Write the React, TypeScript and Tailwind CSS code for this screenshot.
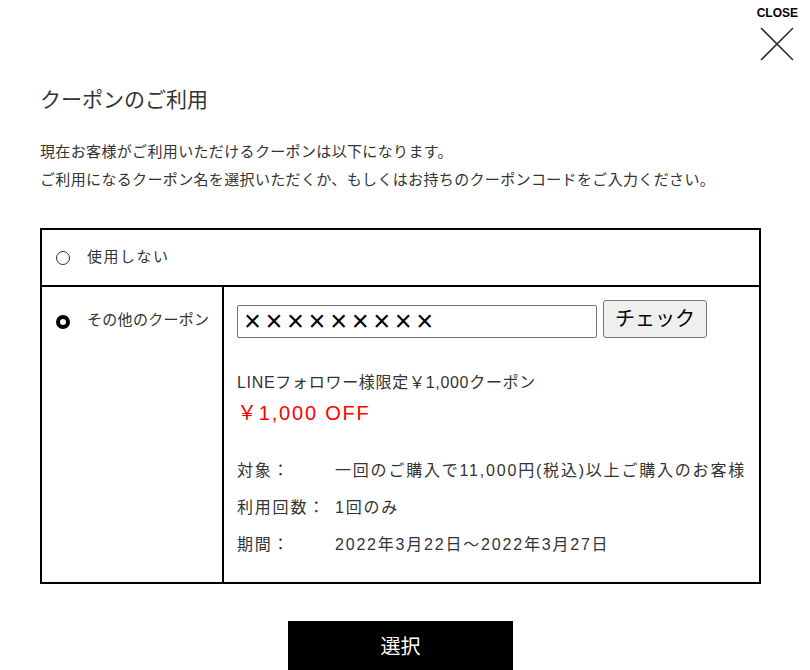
import React from 'react';

const font = { fontFamily: '"Liberation Sans", "Noto Sans CJK JP", sans-serif' };

function Radio({ checked }: { checked: boolean }) {
  return checked ? (
    <span className="inline-block w-[14px] h-[14px] rounded-full border-[4px] border-black bg-white shrink-0" />
  ) : (
    <span className="inline-block w-[14px] h-[14px] rounded-full border border-[#333] bg-white shrink-0" />
  );
}

export default function App() {
  return (
    <div className="relative w-[810px] h-[670px] overflow-hidden bg-white text-[#333]" style={font}>
      {/* Close */}
      <button type="button" className="absolute right-[12px] top-[6px] flex flex-col items-center">
        <span className="text-[12px] font-bold text-black leading-[14px]">CLOSE</span>
        <svg width="36" height="36" viewBox="0 0 36 36" className="mt-[6px]">
          <path d="M2 2 L34 34 M34 2 L2 34" stroke="#333" strokeWidth="1.6" />
        </svg>
      </button>

      <div className="pl-10 pr-[49px] pt-[84px]">
        <h2 className="text-[21px] leading-[32px] text-[#333]">クーポンのご利用</h2>
        <p className="mt-[22px] text-[15px] leading-[28px] tracking-[0.35px]">
          現在お客様がご利用いただけるクーポンは以下になります。
          <br />
          ご利用になるクーポン名を選択いただくか、もしくはお持ちのクーポンコードをご入力ください。
        </p>

        {/* Coupon table */}
        <div className="mt-[34px] border-2 border-black">
          <div className="h-[55px] flex items-center gap-[17px] pl-[14px] text-[15px] tracking-[1.5px]">
            <Radio checked={false} />
            <span>使用しない</span>
          </div>
          <div className="flex border-t-2 border-black h-[297px]">
            <div className="w-[182px] border-r-2 border-black pl-[14px] pt-[22px] flex items-start gap-[17px] text-[15px] tracking-[0.3px]">
              <span className="mt-[4px]"><Radio checked /></span>
              <span className="leading-[22px]">その他のクーポン</span>
            </div>
            <div className="flex-1 pl-[13px] pt-[13px]">
              <div className="flex items-center gap-[6px]">
                <div className="w-[360px] h-[33px] mt-[4px] border border-[#767676] rounded-[2px] pl-[6px] flex items-center text-[29px] leading-none text-black tracking-[4.6px]">
                  ×××××××××
                </div>
                <button
                  type="button"
                  className="w-[104px] h-[38px] border border-[#767676] rounded-[3px] bg-[#efefef] text-[20px] text-black"
                >
                  チェック
                </button>
              </div>
              <p className="mt-[34px] text-[16px] leading-[22px] tracking-[0.7px]">LINEフォロワー様限定￥1,000クーポン</p>
              <p className="mt-[7px] text-[20px] leading-[24px] tracking-[1.8px] text-[#ff0000]">￥1,000 OFF</p>
              <div className="mt-[35px] text-[16px] leading-[22px] tracking-[1.8px] flex flex-col gap-[15px]">
                <div className="flex">
                  <span className="w-[98px]">対象：</span>
                  <span>一回のご購入で11,000円(税込)以上ご購入のお客様</span>
                </div>
                <div className="flex">
                  <span className="w-[98px]">利用回数：</span>
                  <span>1回のみ</span>
                </div>
                <div className="flex">
                  <span className="w-[98px]">期間：</span>
                  <span>2022年3月22日～2022年3月27日</span>
                </div>
              </div>
            </div>
          </div>
        </div>

        <div className="flex justify-center mt-[37px]">
          <button type="button" className="w-[225px] h-[52px] bg-black text-white text-[20px]">
            選択
          </button>
        </div>
      </div>
    </div>
  );
}
